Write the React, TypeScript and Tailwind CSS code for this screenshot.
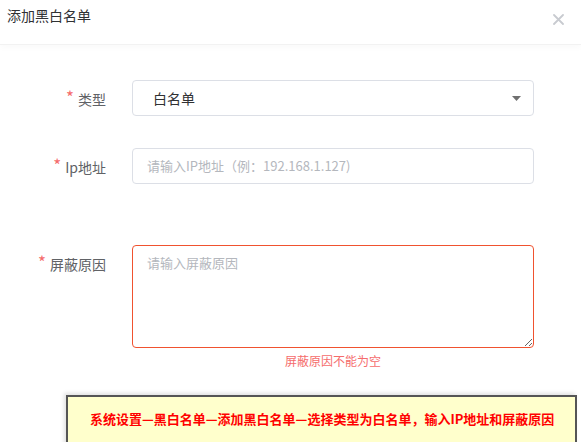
const font = { fontFamily: '"Microsoft YaHei", "Noto Sans CJK SC", "Noto Sans", sans-serif' };

const Star = () => <span className="text-[#f56c6c] mr-[4px] text-[17px] relative top-[-1px]">*</span>;

const App = () => {
  return (
    <div className="w-[581px] h-[442px] bg-white overflow-hidden relative" style={font}>
      {/* header */}
      <div className="h-[45px] flex items-start justify-between border-b border-[#f2f2f2] shadow-[0_3px_6px_rgba(0,0,0,0.025)]">
        <div className="pl-[7px] pt-[5px] text-[14px] leading-[20px] text-[#303133]">添加黑白名单</div>
        <svg className="mr-[17px] mt-[14px]" width="11" height="11" viewBox="0 0 11 11">
          <path d="M1 1 L10 10 M10 1 L1 10" stroke="#c8cbd0" strokeWidth="1.8" strokeLinecap="round" />
        </svg>
      </div>

      <div className="pt-[35px]">
        {/* 类型 */}
        <div className="flex items-center h-[36px]">
          <div className="w-[106px] text-right text-[14px] text-[#606266]">
            <Star />类型
          </div>
          <div className="ml-[26px] w-[402px] h-[36px] border border-[#dcdfe6] rounded-[4px] flex items-center justify-between pl-[20px] pr-[12px]">
            <span className="text-[14px] text-[#303133]">白名单</span>
            <svg width="9" height="5" viewBox="0 0 9 5">
              <path d="M0 0 L9 0 L4.5 5 Z" fill="#707070" />
            </svg>
          </div>
        </div>

        {/* Ip地址 */}
        <div className="flex items-center h-[36px] mt-[32px]">
          <div className="w-[106px] text-right text-[14px] text-[#606266]">
            <Star />Ip地址
          </div>
          <div className="ml-[26px] w-[402px] h-[36px] border border-[#dcdfe6] rounded-[4px] flex items-center pl-[14px]">
            <span className="text-[13px] text-[#b4b7bd]">请输入IP地址（例：192.168.1.127)</span>
          </div>
        </div>

        {/* 屏蔽原因 */}
        <div className="flex items-start mt-[61px]">
          <div className="w-[106px] text-right text-[14px] leading-[20px] text-[#606266] pt-[8px]">
            <Star />屏蔽原因
          </div>
          <div className="ml-[26px] w-[402px] flex flex-col">
            <textarea
              className="w-[402px] h-[103px] border border-[#f0522f] rounded-[4px] px-[14px] py-[7px] text-[13px] leading-[20px] outline-none placeholder:text-[#b4b7bd] resize-y"
              placeholder="请输入屏蔽原因"
              style={font}
            />
            <div className="text-center text-[12px] leading-[16px] text-[#f56c6c] mt-[5px]">屏蔽原因不能为空</div>
          </div>
        </div>

        {/* note */}
        <div className="ml-[66px] mt-[26px] w-[511px] h-[60px] bg-[#ffffcc] border-2 border-[#555555] shadow-[-2px_-2px_4px_rgba(0,0,0,0.12)] pt-[8px] pl-[22px]">
          <span className="text-[13px] leading-[18px] font-bold text-[#ff0000]" style={{ fontFamily: '"Noto Sans CJK SC", sans-serif' }}>
            系统设置—黑白名单—添加黑白名单—选择类型为白名单，输入IP地址和屏蔽原因
          </span>
        </div>
      </div>
    </div>
  );
};

export default App;
